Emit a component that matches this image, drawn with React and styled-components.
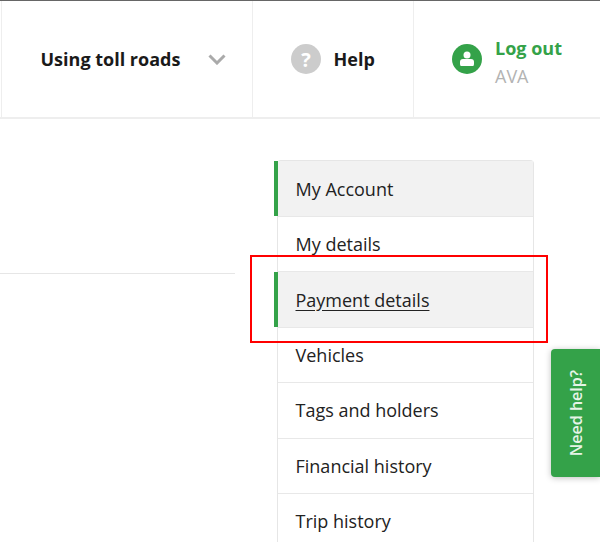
import React from 'react';
import styled, { createGlobalStyle } from 'styled-components';

const GlobalStyle = createGlobalStyle`
  html, body {
    margin: 0;
    padding: 0;
    background: #fff;
    overflow: hidden;
  }
  body {
    font-family: "Open Sans", "Liberation Sans", sans-serif;
    color: #222;
  }
`;

const Page = styled.div`
  position: relative;
  width: 600px;
  height: 542px;
  overflow: hidden;
  border-top: 1px solid #666;
  box-sizing: border-box;
`;

const Header = styled.header`
  display: flex;
  height: 118px;
  box-sizing: border-box;
  border-bottom: 2px solid #eee;
  padding-left: 1px;
`;

const NavCell = styled.div`
  display: flex;
  align-items: center;
  box-sizing: border-box;
  width: ${p => p.$width}px;
  padding-left: ${p => p.$pad}px;
  border-left: 1px solid #eee;
`;

const NavLabel = styled.span`
  font-size: 18px;
  font-weight: 700;
  color: #1a1a1a;
  line-height: 24px;
`;

const Chevron = styled.svg`
  width: 18px;
  height: 11px;
  margin-left: 27.5px;
`;

const HelpBadge = styled.span`
  display: flex;
  align-items: center;
  justify-content: center;
  width: 30px;
  height: 30px;
  margin-right: 12.5px;
  border-radius: 50%;
  background: #ccc;
  color: #fff;
  font-size: 20px;
  font-weight: 700;
`;

const UserBadge = styled.span`
  display: flex;
  align-items: center;
  justify-content: center;
  width: 30px;
  height: 30px;
  margin-right: 13px;
  border-radius: 50%;
  background: #34a249;
`;

const UserText = styled.div`
  display: flex;
  flex-direction: column;
  margin-top: 6px;
`;

const LogOut = styled.span`
  font-size: 18px;
  font-weight: 700;
  line-height: 28px;
  color: #34a249;
`;

const UserName = styled.span`
  font-size: 18px;
  line-height: 28px;
  color: #b3b3b3;
`;

const Body = styled.div`
  display: flex;
  align-items: flex-start;
`;

const Main = styled.div`
  width: 235px;
  height: 154px;
  flex: none;
  border-bottom: 1px solid #e6e6e6;
`;

const Side = styled.nav`
  width: 257px;
  margin: 41px 0 0 42px;
  box-sizing: border-box;
  border: 1px solid #e6e6e6;
  border-bottom: none;
  border-top-right-radius: 4px;
  border-top-left-radius: 4px;
`;

const SideItem = styled.a`
  display: flex;
  align-items: center;
  position: relative;
  box-sizing: border-box;
  height: 55.5px;
  padding-left: 17.5px;
  padding-top: ${p => (p.$active ? '1px' : '0')};
  font-size: 18px;
  color: #222;
  background: ${p => (p.$active ? '#f2f2f2' : '#fff')};
  border-bottom: 1px solid #e8e8e8;
  text-decoration: ${p => (p.$link ? 'underline' : 'none')};
  text-underline-offset: 3px;

  ${p =>
    p.$active &&
    `
    &::before {
      content: '';
      position: absolute;
      left: -4px;
      top: 0;
      bottom: 0;
      width: 4px;
      background: #34a249;
    }
  `}
`;

const Highlight = styled.div`
  position: absolute;
  left: 249.5px;
  top: 254px;
  width: 298px;
  height: 88px;
  box-sizing: border-box;
  border: 2px solid #f00;
  pointer-events: none;
`;

const HelpTab = styled.div`
  position: absolute;
  left: 551px;
  top: 348px;
  width: 49px;
  height: 128px;
  display: flex;
  align-items: center;
  justify-content: center;
  background: #34a249;
  border-radius: 4px 0 0 4px;
  box-shadow: 0 1px 6px rgba(0, 0, 0, 0.25);
  color: #e6f4e8;
  font-size: 16px;
  font-weight: 600;
`;

const HelpTabText = styled.span`
  writing-mode: vertical-rl;
  transform: rotate(180deg);
`;

const items = [
  { label: 'My Account', active: true },
  { label: 'My details' },
  { label: 'Payment details', active: true, link: true },
  { label: 'Vehicles' },
  { label: 'Tags and holders' },
  { label: 'Financial history' },
  { label: 'Trip history' },
];

export default function App() {
  return (
    <Page>
      <GlobalStyle />
      <Header>
        <NavCell $width={251} $pad={38.5}>
          <NavLabel>Using toll roads</NavLabel>
          <Chevron viewBox="0 0 18 11">
            <path d="M1.5 1.5 L9 9 L16.5 1.5" fill="none" stroke="#aaa" strokeWidth="3" />
          </Chevron>
        </NavCell>
        <NavCell $width={161} $pad={38}>
          <HelpBadge>?</HelpBadge>
          <NavLabel>Help</NavLabel>
        </NavCell>
        <NavCell $width={187} $pad={38}>
          <UserBadge>
            <svg width="14" height="16" viewBox="0 0 14 16">
              <circle cx="7" cy="4" r="3.5" fill="#fff" />
              <path d="M1 15 Q0 15 0 13 L0 11 Q0 8 3 8 L11 8 Q14 8 14 11 L14 13 Q14 15 13 15 Z" fill="#fff" />
            </svg>
          </UserBadge>
          <UserText>
            <LogOut>Log out</LogOut>
            <UserName>AVA</UserName>
          </UserText>
        </NavCell>
      </Header>
      <Body>
        <Main />
        <Side>
          {items.map(item => (
            <SideItem key={item.label} $active={item.active} $link={item.link}>
              {item.label}
            </SideItem>
          ))}
        </Side>
      </Body>
      <Highlight />
      <HelpTab>
        <HelpTabText>Need help?</HelpTabText>
      </HelpTab>
    </Page>
  );
}
